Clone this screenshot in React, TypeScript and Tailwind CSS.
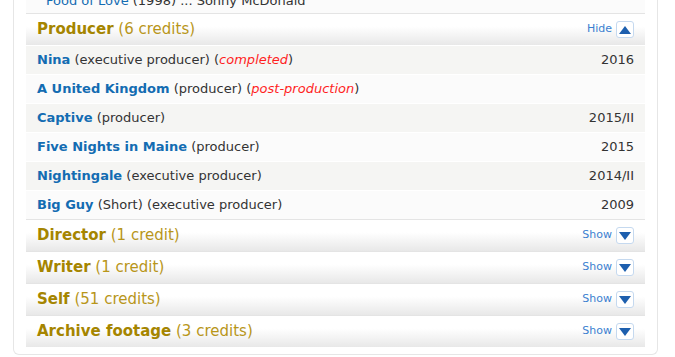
interface Credit {
  title: string
  extra: string
  status?: string
  year?: string
}

const producerCredits: Credit[] = [
  { title: 'Nina', extra: '(executive producer)', status: 'completed', year: '2016' },
  { title: 'A United Kingdom', extra: '(producer)', status: 'post-production' },
  { title: 'Captive', extra: '(producer)', year: '2015/II' },
  { title: 'Five Nights in Maine', extra: '(producer)', year: '2015' },
  { title: 'Nightingale', extra: '(executive producer)', year: '2014/II' },
  { title: 'Big Guy', extra: '(Short) (executive producer)', year: '2009' },
]

const collapsed = [
  { name: 'Director', count: '(1 credit)' },
  { name: 'Writer', count: '(1 credit)' },
  { name: 'Self', count: '(51 credits)' },
  { name: 'Archive footage', count: '(3 credits)' },
]

const Toggle = ({ open }: { open: boolean }) => (
  <div className="flex items-center gap-[4px]">
    <span className="text-[11px] text-[#3b7fd0]">{open ? 'Hide' : 'Show'}</span>
    <span className="flex h-[17px] w-[18px] items-center justify-center rounded-[3px] border border-[#c5d9ef] bg-white">
      <svg width="12" height="8" viewBox="0 0 12 8">
        {open ? (
          <polygon points="6,0 12,8 0,8" fill="#1d5fae" />
        ) : (
          <polygon points="0,0 12,0 6,8" fill="#1d5fae" />
        )}
      </svg>
    </span>
  </div>
)

const Header = ({ name, count, open }: { name: string; count: string; open: boolean }) => (
  <div className="flex h-[32px] items-center justify-between border-t border-[#e4e4e4] bg-gradient-to-b from-white from-40% to-[#e8e8e8] pl-[11px] pr-[11px]">
    <div className="text-[15px] text-[#a58500]">
      <span className="font-bold">{name}</span> <span className="text-[#b8961a]">{count}</span>
    </div>
    <Toggle open={open} />
  </div>
)

export default function App() {
  return (
    <div className="h-[357px] w-[675px] overflow-hidden bg-white" style={{ fontFamily: '"DejaVu Sans", Verdana, sans-serif' }}>
      <div className="ml-[13px] w-[645px] rounded-b-[6px] border-b border-l border-r border-[#e6e6e6] px-[12px] pb-[7px]">
        <div className="h-[13px] overflow-hidden bg-[#fbfbfb]">
          <div className="-mt-[9px] pl-[20px] text-[13px] text-[#333]">
            <span className="text-[#136cb2]">Food of Love</span> (1998) ... Sonny McDonald
          </div>
        </div>
        <Header name="Producer" count="(6 credits)" open />
        {producerCredits.map((c, i) => (
          <div
            key={c.title}
            className={`flex h-[29px] items-center justify-between border-t border-white pl-[11px] pr-[11px] text-[13px] text-[#333] ${
              i % 2 === 0 ? 'bg-[#f5f5f3]' : 'bg-[#fbfbfb]'
            }`}
          >
            <div>
              <span className="font-bold text-[#136cb2]">{c.title}</span> {c.extra}
              {c.status && (
                <>
                  {' '}(<span className="italic text-[#ff1f1f]">{c.status}</span>)
                </>
              )}
            </div>
            {c.year && <div>{c.year}</div>}
          </div>
        ))}
        {collapsed.map((s) => (
          <Header key={s.name} name={s.name} count={s.count} open={false} />
        ))}
      </div>
    </div>
  )
}
